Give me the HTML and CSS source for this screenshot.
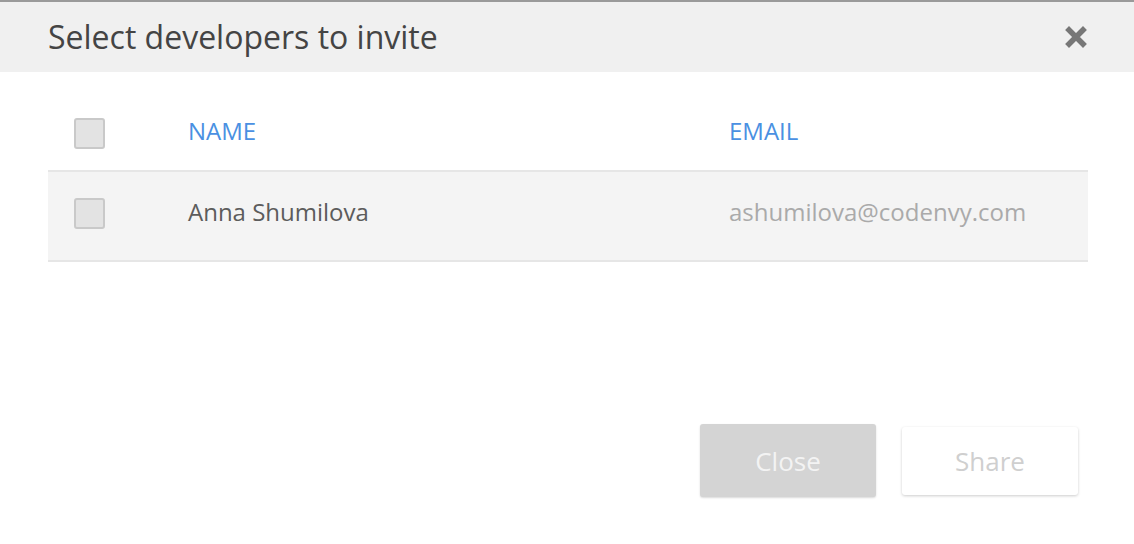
FILE: index.html
```html
<!DOCTYPE html>
<html>
<head>
<meta charset="utf-8">
<link rel="stylesheet" href="styles.css">
</head>
<body>
<div class="dialog">
  <div class="header">
    <div class="title">Select developers to invite</div>
    <svg class="close-icon" width="22" height="22" viewBox="0 0 22 22">
      <path d="M4 4 L18 18 M18 4 L4 18" stroke="#777" stroke-width="5.5" stroke-linecap="square"/>
    </svg>
  </div>
  <div class="table">
    <div class="row head">
      <div class="cell"><span class="checkbox"></span></div>
      <div class="cell col-title">NAME</div>
      <div class="cell col-title">EMAIL</div>
    </div>
    <div class="row item">
      <div class="cell"><span class="checkbox"></span></div>
      <div class="cell name">Anna Shumilova</div>
      <div class="cell email">ashumilova@codenvy.com</div>
    </div>
  </div>
  <div class="actions">
    <button class="btn btn-close">Close</button>
    <button class="btn btn-share">Share</button>
  </div>
</div>
</body>
</html>
```
FILE: styles.css
```css
* { box-sizing: border-box; }
html, body { margin: 0; padding: 0; background: #fff; }
body { font-family: "Open Sans", "Liberation Sans", sans-serif; width: 1134px; height: 544px; overflow: hidden; }
.dialog { border-top: 2px solid #9a9a9a; }
.header {
  height: 70px;
  background: #f0f0f0;
  display: flex;
  align-items: center;
  justify-content: space-between;
  padding: 0 47px 0 48px;
}
.title { font-size: 32px; color: #444; line-height: 1; margin-top: 0; }
.close-icon { display: block; margin-top: 0; }
.table { margin: 0 46px 0 48px; }
.row {
  display: grid;
  grid-template-columns: 140px 541px 1fr;
  align-items: center;
}
.row.head { padding: 46px 0 21px; }
.row.item {
  background: #f4f4f4;
  border-top: 2px solid #e6e6e6;
  border-bottom: 2px solid #e6e6e6;
  padding: 26px 0 31px;
}
.cell { line-height: 1; }
.checkbox {
  display: block;
  width: 31px;
  height: 31px;
  margin-left: 26px;
  border: 2px solid #c9c9c9;
  background: #e3e3e3;
  border-radius: 3px;
}
.col-title { font-size: 24px; color: #4a90e2; margin-top: -6px; }
.name { font-size: 24px; color: #5c5c5c; margin-top: -4px; }
.email { font-size: 24px; color: #aaa; margin-top: -4px; }
.actions {
  display: flex;
  justify-content: flex-end;
  align-items: center;
  gap: 26px;
  margin: 162px 56px 0 0;
}
.btn {
  width: 176px;
  border: none;
  border-radius: 3px;
  font-family: "Open Sans", "Liberation Sans", sans-serif;
  font-size: 26px;
  padding: 0;
}
.btn-close {
  height: 73px;
  background: #d4d4d4;
  color: #f3f3f3;
  box-shadow: 0 1px 2px rgba(0,0,0,0.15);
}
.btn-share {
  height: 68px;
  background: #fff;
  color: #cfcfcf;
  box-shadow: 0 1px 3px rgba(0,0,0,0.2);
}
```
